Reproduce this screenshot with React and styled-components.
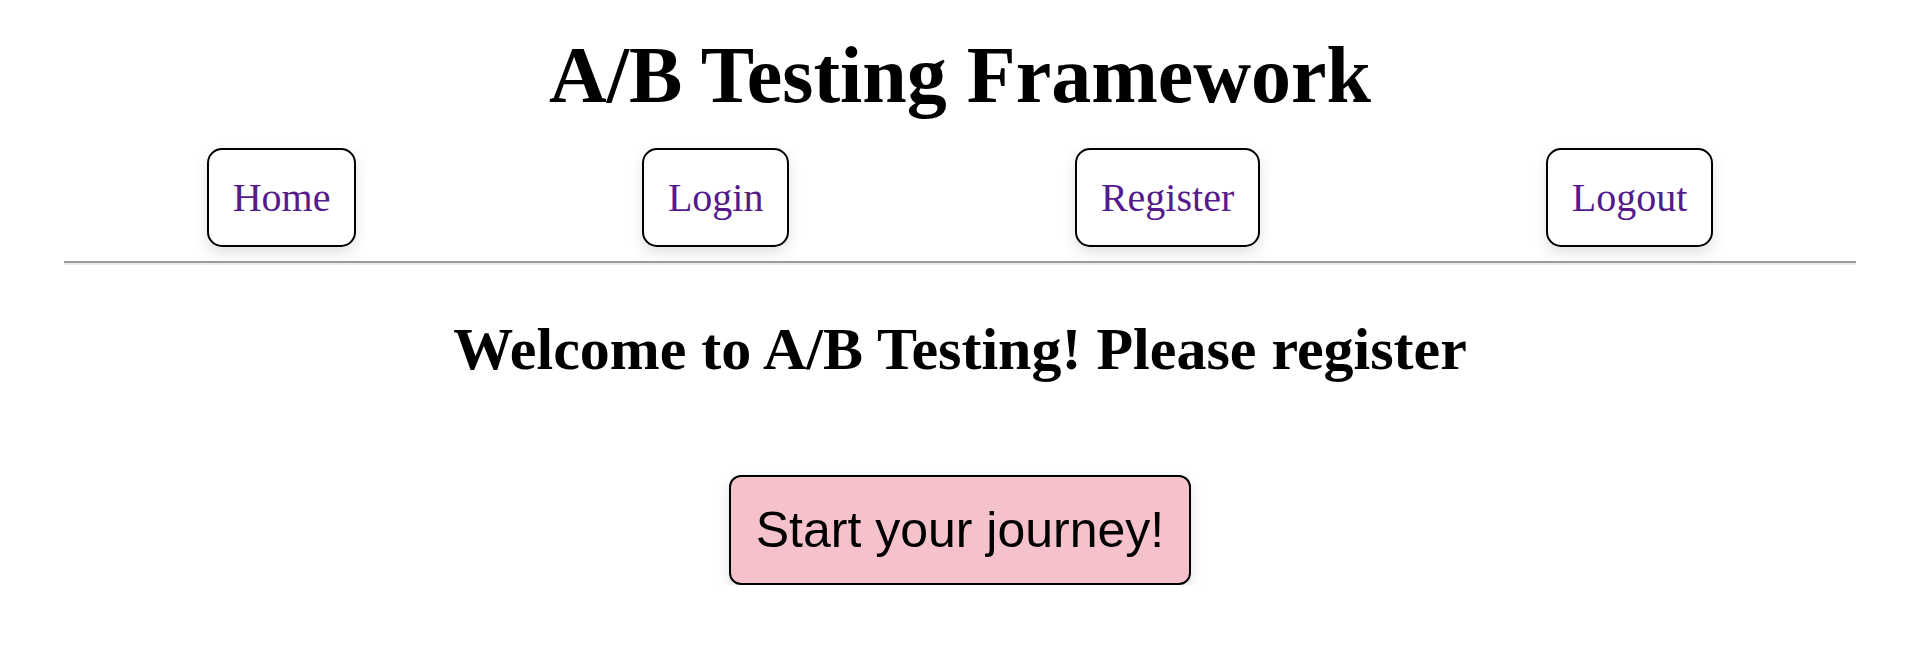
import React from 'react';
import styled, { createGlobalStyle } from 'styled-components';

const GlobalStyle = createGlobalStyle`
  html, body {
    margin: 0;
    padding: 0;
    background: #fff;
  }
  body {
    font-family: "Liberation Serif", "Times New Roman", serif;
    color: #000;
  }
`;

const Page = styled.div`
  display: flex;
  flex-direction: column;
  align-items: center;
  padding: 0 64px;
`;

const Title = styled.h1`
  margin: 29px 0 27px;
  font-size: 80px;
  line-height: 92px;
  font-weight: bold;
  text-align: center;
`;

const Nav = styled.nav`
  display: flex;
  justify-content: space-around;
  align-items: center;
  align-self: stretch;
`;

const NavLink = styled.a`
  display: block;
  padding: 25px 24px 24px;
  border: 2px solid #000;
  border-radius: 15px;
  box-shadow: 0 6px 14px rgba(0, 0, 0, 0.12);
  font-size: 40px;
  line-height: 46px;
  color: #551a8b;
  text-decoration: none;
  background: #fff;
`;

const Divider = styled.hr`
  align-self: stretch;
  height: 0;
  margin: 14px 0 0;
  border: none;
  border-top: 2px solid #9a9a9a;
  border-bottom: 2px solid #ededed;
`;

const Welcome = styled.h2`
  margin: 50px 0 91px;
  font-size: 60px;
  line-height: 69px;
  font-weight: bold;
  text-align: center;
`;

const StartButton = styled.button`
  padding: 24px 25px;
  border: 2px solid #000;
  border-radius: 12px;
  background: #f5c2cb;
  box-shadow: 0 6px 14px rgba(0, 0, 0, 0.12);
  font-family: "Liberation Sans", Arial, sans-serif;
  font-size: 50px;
  line-height: 58px;
  color: #000;
  cursor: pointer;
`;

const App = () => {
  const links = ['Home', 'Login', 'Register', 'Logout'];
  return (
    <>
      <GlobalStyle />
      <Page>
        <Title>A/B Testing Framework</Title>
        <Nav>
          {links.map((x) => (
            <NavLink key={x} href="#">
              {x}
            </NavLink>
          ))}
        </Nav>
        <Divider />
        <Welcome>Welcome to A/B Testing! Please register</Welcome>
        <StartButton>Start your journey!</StartButton>
      </Page>
    </>
  );
};

export default App;
